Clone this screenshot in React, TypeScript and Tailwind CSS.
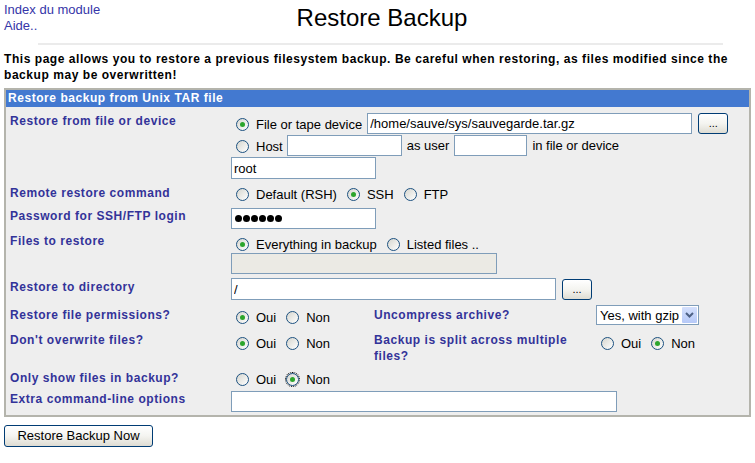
import clsx from "clsx"

const label = "text-[12px] font-bold leading-[16px] tracking-[0.55px] text-[#333399]"
const field = "h-[21px] border border-[#7f9db9] bg-white px-[2px] text-[13px] text-black outline-none"

function Radio({ text, checked = false, focus = false }: { text: string; checked?: boolean; focus?: boolean }) {
  return (
    <span className="flex items-center">
      <span
        className={clsx(
          "ml-[5px] mr-[7px] flex h-[13px] w-[13px] items-center justify-center rounded-full border border-[#1c5180] bg-linear-to-br from-[#d6d6cf] to-white",
          focus && "outline outline-1 outline-dotted outline-black"
        )}
      >
        {checked && <span className="h-[5px] w-[5px] rounded-full bg-[#2ca52c]" />}
      </span>
      <span>{text}</span>
    </span>
  )
}

function Radios({ items }: { items: { text: string; checked?: boolean; focus?: boolean }[] }) {
  return (
    <div className="flex h-[21px] items-center gap-[5px] pt-[2px] text-[13px] text-black">
      {items.map((it) => (
        <Radio key={it.text} {...it} />
      ))}
    </div>
  )
}

function XpButton({ children, className }: { children: React.ReactNode; className?: string }) {
  return (
    <button
      className={clsx(
        "rounded-[3px] border border-[#003c74] bg-linear-to-b from-white via-[#f4f4f0] to-[#dedcd3] text-black",
        className
      )}
    >
      {children}
    </button>
  )
}

export default function App() {
  return (
    <div className="min-h-[463px] bg-white px-[4px] font-['Liberation_Sans',Arial,sans-serif]">
      {/* Header */}
      <div className="grid grid-cols-[1fr_auto_1fr] items-start">
        <div className="flex flex-col pt-[2px] text-[13px] leading-[16px] text-[#3535a8]">
          <a>Index du module</a>
          <a>Aide..</a>
        </div>
        <h1 className="pl-[9px] pt-[4px] text-[24px] leading-[28px] text-black">Restore Backup</h1>
        <div />
      </div>
      <div className="ml-[34px] mt-[9px] h-[2px] w-[685px] bg-[#ebebeb]" />

      <p className="mt-[6px] text-[12px] font-bold leading-[16px] tracking-[0.55px] text-black">
        This page allows you to restore a previous filesystem backup. Be careful when restoring, as files modified
        since the backup may be overwritten!
      </p>

      {/* Form table */}
      <div className="mt-[5px] border-2 border-[#b4b4ac] bg-[#eeeeee]">
        <div className="h-[17px] bg-[#4379d0] pl-[2px] text-[12px] font-bold leading-[17px] tracking-[0.55px] text-white">
          Restore backup from Unix TAR file
        </div>

        <div className="grid grid-cols-[221px_143px_222px_1fr] px-[4px] pb-[1px] pt-[4px] text-[13px]">
          {/* Restore from */}
          <div className={clsx(label, "py-[2px]")}>Restore from file or device</div>
          <div className="col-span-3 flex flex-col gap-[1px] py-[2px]">
            <div className="flex items-center">
              <Radios items={[{ text: "File or tape device", checked: true }]} />
              <input readOnly value="/home/sauve/sys/sauvegarde.tar.gz" className={clsx(field, "ml-[5px] w-[325px]")} />
              <XpButton className="ml-[6px] h-[21px] w-[30px] text-[11px]">...</XpButton>
            </div>
            <div className="flex items-center">
              <Radios items={[{ text: "Host" }]} />
              <input readOnly value="" className={clsx(field, "ml-[4px] w-[115px]")} />
              <span className="ml-[5px]">as user</span>
              <input readOnly value="" className={clsx(field, "ml-[5px] w-[73px]")} />
              <span className="ml-[5px]">in file or device</span>
            </div>
            <input readOnly value="root" className={clsx(field, "h-[22px] w-[145px]")} />
          </div>

          {/* Remote command */}
          <div className={clsx(label, "pb-[2px] pt-[4px]")}>Remote restore command</div>
          <div className="col-span-3 py-[2px]">
            <Radios items={[{ text: "Default (RSH)" }, { text: "SSH", checked: true }, { text: "FTP" }]} />
          </div>

          {/* Password */}
          <div className={clsx(label, "py-[2px]")}>Password for SSH/FTP login</div>
          <div className="col-span-3 py-[2px]">
            <div className={clsx(field, "flex w-[145px] items-center gap-[1px] pl-[3px]")}>
              {[0, 1, 2, 3, 4, 5].map((i) => (
                <span key={i} className="h-[7px] w-[7px] rounded-full bg-black" />
              ))}
            </div>
          </div>

          {/* Files */}
          <div className={clsx(label, "py-[2px]")}>Files to restore</div>
          <div className="col-span-3 flex flex-col py-[2px]">
            <Radios items={[{ text: "Everything in backup", checked: true }, { text: "Listed files .." }]} />
            <div className="-mt-[1px] h-[21px] w-[266px] border border-[#7f9db9] bg-[#ebeae4]" />
          </div>

          {/* Directory */}
          <div className={clsx(label, "pb-[2px] pt-[3px]")}>Restore to directory</div>
          <div className="col-span-3 flex items-center py-[2px]">
            <input readOnly value="/" className={clsx(field, "h-[22px] w-[325px]")} />
            <XpButton className="ml-[6px] h-[21px] w-[30px] text-[11px]">...</XpButton>
          </div>

          {/* Permissions / Uncompress */}
          <div className={clsx(label, "pb-[2px] pt-[5px]")}>Restore file permissions?</div>
          <div className="pb-[2px] pt-[4px]">
            <Radios items={[{ text: "Oui", checked: true }, { text: "Non" }]} />
          </div>
          <div className={clsx(label, "pb-[2px] pt-[5px]")}>Uncompress archive?</div>
          <div className="pb-[5px] pt-[3px]">
            <div className="flex h-[20px] w-[103px] items-stretch border border-[#7f9db9] bg-white p-[1px]">
              <span className="flex-1 pl-[2px] text-[13px] leading-[17px] text-black">Yes, with gzip</span>
              <span className="flex w-[15px] items-center justify-center rounded-[1px] bg-linear-to-b from-[#d4e0fc] to-[#b6c9f8]">
                <svg width="9" height="6" viewBox="0 0 9 6">
                  <path d="M1 1 L4.5 4.5 L8 1" fill="none" stroke="#4d6185" strokeWidth="2" />
                </svg>
              </span>
            </div>
          </div>

          {/* Overwrite / Split */}
          <div className={clsx(label, "py-[2px]")}>Don't overwrite files?</div>
          <div className="py-[2px]">
            <Radios items={[{ text: "Oui", checked: true }, { text: "Non" }]} />
          </div>
          <div className={clsx(label, "max-w-[205px] pb-[3px] pt-[2px]")}>Backup is split across multiple files?</div>
          <div className="py-[2px]">
            <Radios items={[{ text: "Oui" }, { text: "Non", checked: true }]} />
          </div>

          {/* Only show */}
          <div className={clsx(label, "h-[22px] pt-[3px]")}>Only show files in backup?</div>
          <div className="col-span-3 h-[22px] pt-[1px]">
            <Radios items={[{ text: "Oui" }, { text: "Non", checked: true, focus: true }]} />
          </div>

          {/* Extra */}
          <div className={clsx(label, "py-[2px]")}>Extra command-line options</div>
          <div className="col-span-3 py-[2px]">
            <input readOnly value="" className={clsx(field, "w-[386px]")} />
          </div>
        </div>
      </div>

      <XpButton className="mt-[8px] h-[22px] w-[149px] text-[13px]">Restore Backup Now</XpButton>
    </div>
  )
}
